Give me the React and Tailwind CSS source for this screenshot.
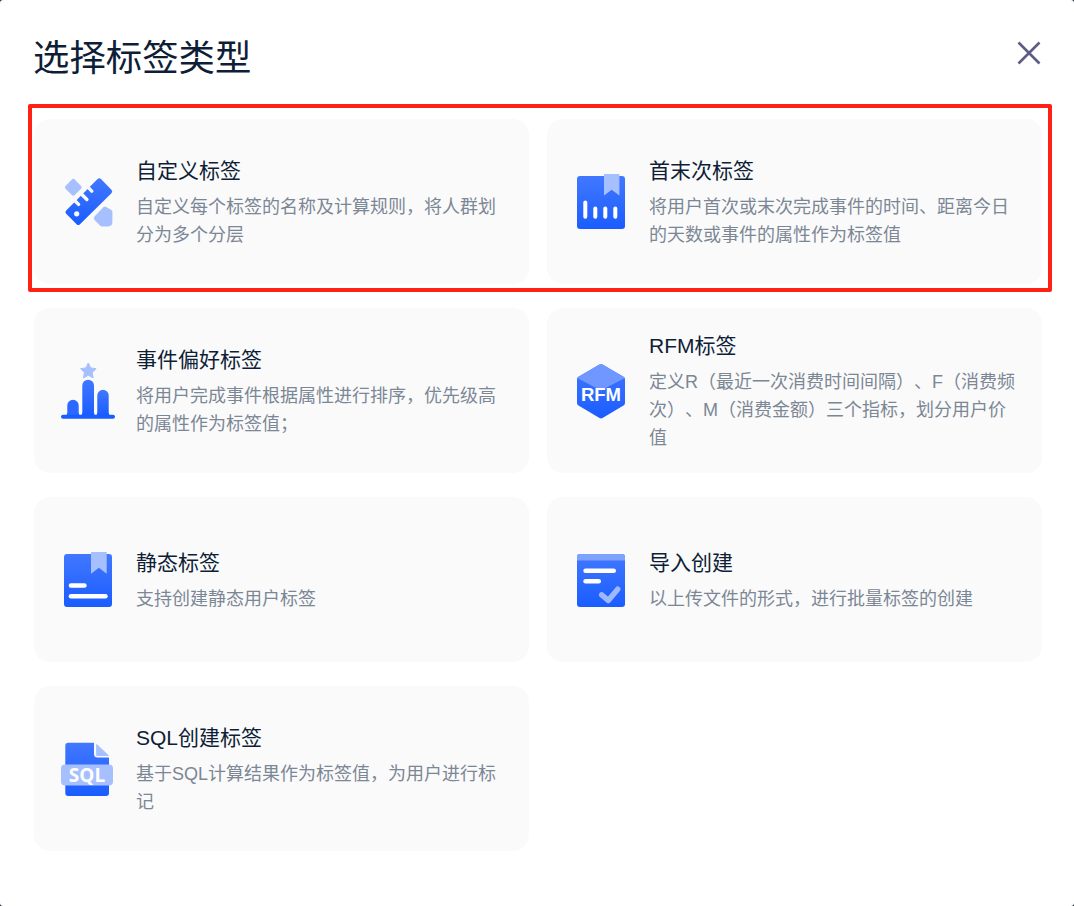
import React from "react";

const BLUE = "url(#blueFill)";
const LIGHT = "#a6c0ff";

// shared gradient, one hidden svg is enough for all icons
function IconDefs() {
  return (
    <svg width="0" height="0" className="absolute">
      <defs>
        <linearGradient id="blueFill" x1="0" y1="0" x2="0" y2="1">
          <stop offset="0%" stopColor="#4178ff" />
          <stop offset="100%" stopColor="#1a5cff" />
        </linearGradient>
      </defs>
    </svg>
  );
}

function Icon({ children }) {
  return (
    <svg width="56" height="56" viewBox="0 0 56 56" className="shrink-0">
      {children}
    </svg>
  );
}

const RulerIcon = () => (
  <Icon>
    <rect x="6.8" y="6.8" width="13" height="13" rx="2" transform="rotate(45 13.3 13.3)" fill={LIGHT} />
    <path d="M34.5 42.5 L43.5 33 Q44.5 32 45.8 32.7 L51 35.7 Q52.4 36.5 52.4 38 L52.4 48 Q52.4 52.4 48.2 52.4 L42.5 52.4 Q41 52.4 40 51.4 L34.5 46 Q33 44 34.5 42.5 Z" fill={LIGHT} />
    <path d="M37.6 5 Q39.3 3.3 41 5 L51.4 15.8 Q53.1 17.5 51.4 19.2 L20 50.2 Q18.3 51.9 16.6 50.2 L6.2 39.8 Q4.5 38 6.2 36.4 Z" fill={BLUE} />
    <circle cx="16.7" cy="39.8" r="2.6" fill="#fafafa" />
    <path d="M15.4 27.2 L18.6 30.4 M21.9 20.5 L26.9 25.5 M28.6 13.9 L31.8 17.1" stroke="#fafafa" strokeWidth="3.4" strokeLinecap="round" />
  </Icon>
);

const BookBarsIcon = () => (
  <Icon>
    <rect x="4" y="2" width="48" height="53" rx="3" fill={BLUE} />
    <path d="M31 0 H46.4 V21.5 L38.7 15.8 L31 21.5 Z" fill={LIGHT} />
    <rect x="10.3" y="26.5" width="4" height="18.3" rx="2" fill="#fff" />
    <rect x="20.3" y="32.5" width="4" height="12.3" rx="2" fill="#fff" />
    <rect x="30.3" y="32.5" width="4" height="12.3" rx="2" fill="#fff" />
    <rect x="40.3" y="32.5" width="4" height="12.3" rx="2" fill="#fff" />
  </Icon>
);

const RankIcon = () => (
  <Icon>
    <path d="M28.3 0 L30.7 4.9 L36 5.7 L32.2 9.5 L33.1 14.9 L28.3 12.3 L23.5 14.9 L24.4 9.5 L20.6 5.7 L25.9 4.9 Z" fill={LIGHT} stroke={LIGHT} strokeWidth="1" strokeLinejoin="round" />
    <path d="M5.3 52.5 Q7.3 52 7.3 49.5 V42.5 A5.7 5.7 0 0 1 18.7 42.5 V49.5 Q18.7 52 20.7 52.5 Z" fill="#2a68ff" />
    <path d="M20.3 52.5 Q22.3 52 22.3 49.5 V22.5 A5.8 5.8 0 0 1 34 22.5 V49.5 Q34 52 36 52.5 Z" fill={BLUE} />
    <path d="M35.3 52.5 Q37.3 52 37.3 49.5 V32.5 A5.7 5.7 0 0 1 48.7 32.5 V49.5 Q48.7 52 50.7 52.5 Z" fill={BLUE} />
    <rect x="1" y="51.8" width="54" height="4" rx="2" fill="#1a5cff" />
  </Icon>
);

const RfmIcon = () => (
  <Icon>
    <path d="M26.5 1.6 Q28 0.8 29.5 1.6 L50.5 13.8 Q52 14.7 52 16.4 V40 Q52 41.6 50.5 42.5 L29.5 55 Q28 55.8 26.5 55 L5.5 42.5 Q4 41.6 4 40 V16.4 Q4 14.7 5.5 13.8 Z" fill={BLUE} />
    <path d="M26.5 1.6 Q28 0.8 29.5 1.6 L50.5 13.8 Q51.5 14.4 51.8 15 L28 27.5 L4.2 15 Q4.5 14.4 5.5 13.8 Z" fill="#6f97ff" />
    <text x="28" y="37.5" textAnchor="middle" fill="#fff" fontSize="18.5" fontWeight="700" fontFamily="'Liberation Sans', sans-serif">RFM</text>
  </Icon>
);

const BookLinesIcon = () => (
  <Icon>
    <rect x="4" y="2" width="48" height="53" rx="3" fill={BLUE} />
    <path d="M31 0 H46.7 V21.8 L38.9 15.8 L31 21.8 Z" fill={LIGHT} />
    <rect x="8.7" y="31.3" width="18" height="4.5" rx="2.25" fill="#fff" />
    <rect x="8.7" y="42" width="39" height="4.5" rx="2.25" fill="#fff" />
  </Icon>
);

const ImportIcon = () => (
  <Icon>
    <rect x="4" y="2" width="48" height="53" rx="3" fill={BLUE} />
    <path d="M4 8.5 V5 Q4 2 7 2 H49 Q52 2 52 5 V8.5 Z" fill="#7ea2ff" />
    <rect x="10.3" y="16.6" width="32.7" height="4.5" rx="2.25" fill="#fff" />
    <rect x="10.3" y="27" width="17.7" height="4.5" rx="2.25" fill="#fff" />
    <path d="M28.7 42.8 L35.3 48.5 L44.7 37.2" fill="none" stroke="#9db8ff" strokeWidth="5.5" strokeLinecap="round" strokeLinejoin="round" />
  </Icon>
);

const SqlIcon = () => (
  <Icon>
    <path d="M5.3 4.8 Q5.3 1.8 8.3 1.8 H34 V13 Q34 16.5 37.5 16.5 H49 V52 Q49 55 46 55 H8.3 Q5.3 55 5.3 52 Z" fill={BLUE} />
    <path d="M36.7 3.5 L48.3 14.5 H36.7 Z" fill={LIGHT} stroke={LIGHT} strokeWidth="1" strokeLinejoin="round" />
    <rect x="1" y="23.5" width="52" height="21" rx="4" fill={LIGHT} />
    <text x="27" y="41" textAnchor="middle" fill="#fff" fontSize="19" fontWeight="700" fontFamily="'Open Sans', sans-serif">SQL</text>
  </Icon>
);

const tagTypes = [
  { title: "自定义标签", desc: "自定义每个标签的名称及计算规则，将人群划分为多个分层", icon: <RulerIcon /> },
  { title: "首末次标签", desc: "将用户首次或末次完成事件的时间、距离今日的天数或事件的属性作为标签值", icon: <BookBarsIcon /> },
  { title: "事件偏好标签", desc: "将用户完成事件根据属性进行排序，优先级高的属性作为标签值；", icon: <RankIcon /> },
  { title: "RFM标签", desc: "定义R（最近一次消费时间间隔）、F（消费频次）、M（消费金额）三个指标，划分用户价值", icon: <RfmIcon /> },
  { title: "静态标签", desc: "支持创建静态用户标签", icon: <BookLinesIcon /> },
  { title: "导入创建", desc: "以上传文件的形式，进行批量标签的创建", icon: <ImportIcon /> },
  { title: "SQL创建标签", desc: "基于SQL计算结果作为标签值，为用户进行标记", icon: <SqlIcon /> },
];

const FONT = "font-['Liberation_Sans','Noto_Sans_CJK_SC',sans-serif]";

export default function App() {
  return (
    <div className={`h-[906px] w-full bg-[#1d2a3f] ${FONT} [text-spacing-trim:space-all]`}>
      <IconDefs />
      <div className="relative h-full w-full rounded-[3px] bg-white pl-[34px] pr-[32px]">
        {/* Header */}
        <div className="flex h-[119px] items-start justify-between">
          <h1 className="mt-[33px] -ml-[1px] text-[36.4px] leading-[52px] font-normal text-[#0e1e36]">
            选择标签类型
          </h1>
          <button className="mt-[41px] mr-[1px] text-[#5c5c86]" aria-label="关闭">
            <svg width="24" height="24" viewBox="0 0 24 24">
              <path d="M1.5 1.5 L22.5 22.5 M22.5 1.5 L1.5 22.5" stroke="currentColor" strokeWidth="2.6" fill="none" />
            </svg>
          </button>
        </div>

        {/* Cards */}
        <div className="grid grid-cols-2 gap-x-[18px] gap-y-[24px]">
          {tagTypes.map((item) => (
            <div
              key={item.title}
              className="flex h-[165px] items-center gap-[20px] rounded-[16px] bg-[#fafafa] pl-[26px] pr-[24px]"
            >
              {item.icon}
              <div className="min-w-0 flex-1">
                <div className="text-[21px] leading-[32px] text-[#0e1e36]">{item.title}</div>
                <div className="mt-[6px] text-[18px] leading-[28px] text-[#7c8796]">{item.desc}</div>
              </div>
            </div>
          ))}
        </div>

        {/* Red highlight annotation over the first row */}
        <div className="pointer-events-none absolute left-[28px] top-[104px] h-[188px] w-[1024px] rounded-[2px] border-4 border-[#ff2116]" />
      </div>
    </div>
  );
}
